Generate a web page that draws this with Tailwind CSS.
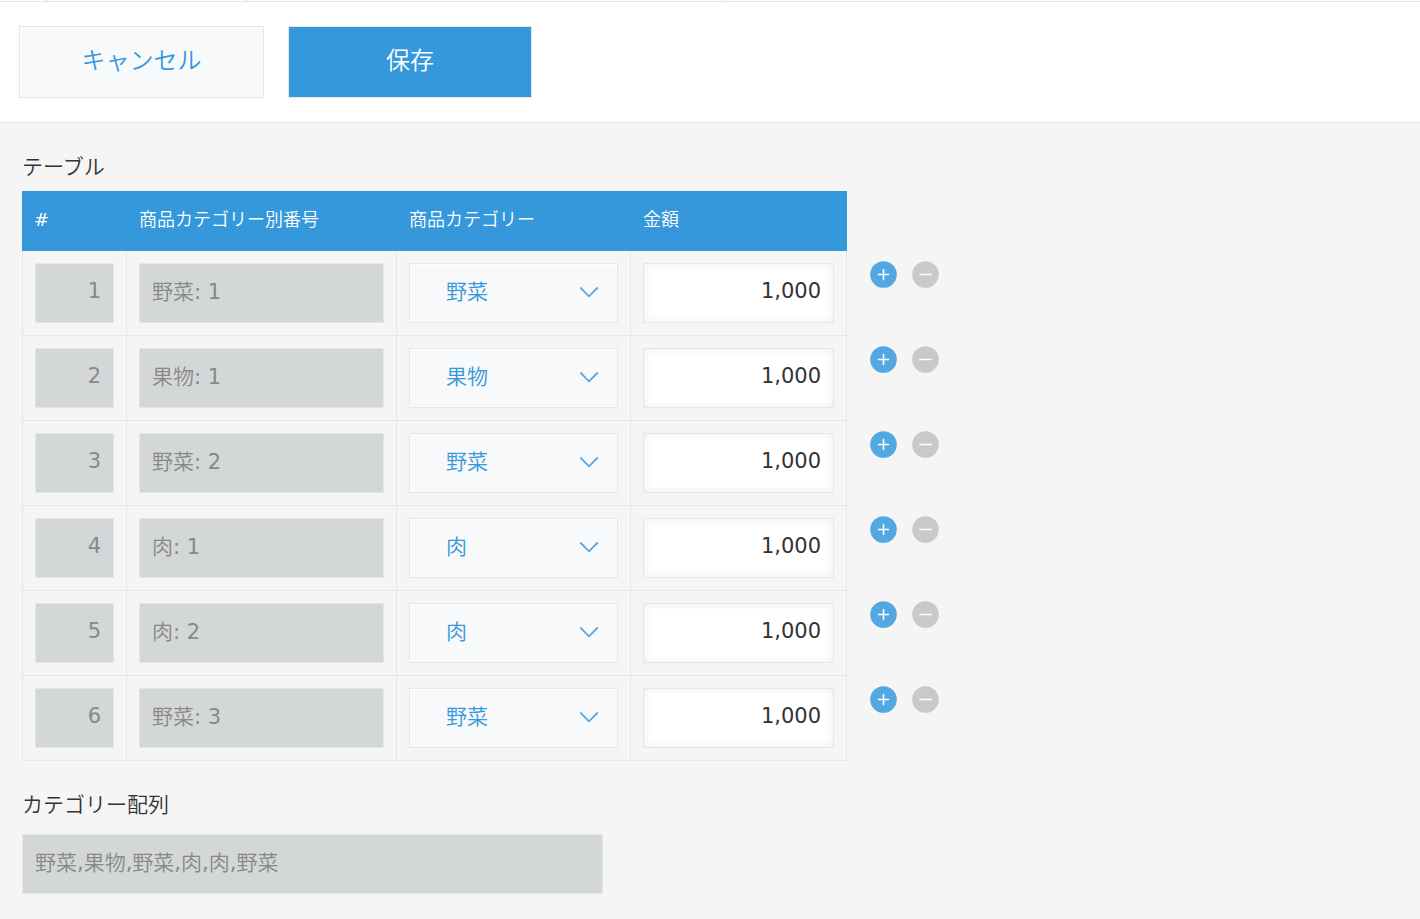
<!DOCTYPE html>
<html lang="ja">
<head>
<meta charset="utf-8">
<meta name="viewport" content="width=device-width, initial-scale=1">
<title>レコード編集</title>
<script src="https://cdn.jsdelivr.net/npm/@tailwindcss/browser@4"></script>
</head>
<body class="min-h-screen bg-[#f5f5f5] font-['DejaVu_Sans','Noto_Sans_CJK_JP_DemiLight','Noto_Sans_CJK_JP',sans-serif] text-[21px] font-normal text-[#333333]">
<header class="border-b border-[#e3e7e8] bg-white">
  <div class="flex h-0.5 border-b border-[#e3e7e8]" aria-hidden="true">
    <span class="w-12 border-r-2 border-[#e3e7e8]"></span>
    <span class="w-[199px] border-r-2 border-[#e3e7e8]"></span>
    <span class="w-[479px] border-r-2 border-[#e3e7e8]"></span>
  </div>
  <div class="flex gap-6 px-[19px] py-6 text-2xl">
    <button type="button" class="h-[72px] w-[245px] border border-[#e3e7e8] bg-[#f7f9fa] pb-0.5 font-[350] text-[#3498db] shadow-[inset_1px_1px_2px_#ffffff]">キャンセル</button>
    <button type="button" class="h-[72px] w-[244px] border border-[#e3e7e8] bg-[#3498db] pb-0.5 font-[350] text-white">保存</button>
  </div>
</header>
<main class="px-[22px] pt-7 pb-[26px]">
  <h2 class="mb-2 font-[350] leading-8">テーブル</h2>
  <table class="border-separate border-spacing-0" aria-label="テーブル">
    <thead>
      <tr class="h-[60px] text-left text-lg text-white">
        <th scope="col" class="bg-[#3498db] pb-0.5 pl-3 font-normal">#</th>
        <th scope="col" class="bg-[#3498db] pb-0.5 pl-3 font-normal">商品カテゴリー別番号</th>
        <th scope="col" class="bg-[#3498db] pb-0.5 pl-3 font-normal">商品カテゴリー</th>
        <th scope="col" class="bg-[#3498db] pb-0.5 pl-3 font-normal">金額</th>
        <td></td>
      </tr>
    </thead>
    <tbody id="rows"></tbody>
  </table>
  <label for="categories" class="mt-7 mb-[13px] block font-[350] leading-8">カテゴリー配列</label>
  <input id="categories" disabled value="野菜,果物,野菜,肉,肉,野菜" class="block h-[60px] w-[581px] border border-[#e3e7e8] bg-[#d4d7d7] px-3 pb-1.5 text-[#888888]">
</main>
<template id="row">
  <tr>
    <td class="border-x border-b border-[#e3e7e8] p-3"><input disabled data-no aria-label="#" class="block h-[60px] w-[79px] border border-[#e3e7e8] bg-[#d4d7d7] px-3 pb-1 text-right text-[#888888]"></td>
    <td class="border-r border-b border-[#e3e7e8] p-3"><input disabled data-code aria-label="商品カテゴリー別番号" class="block h-[60px] w-[245px] border border-[#e3e7e8] bg-[#d4d7d7] px-3 pb-1.5 text-[#888888]"></td>
    <td class="border-r border-b border-[#e3e7e8] p-3">
      <div class="relative">
        <select aria-label="商品カテゴリー" class="block h-[60px] w-[209px] appearance-none border border-[#e3e7e8] bg-[#f7f9fa] pl-9 font-[350] text-[#3498db] shadow-[inset_1px_1px_2px_#ffffff]"><option>野菜</option><option>果物</option><option>肉</option></select>
        <svg class="pointer-events-none absolute top-[23px] right-[19px] h-3 w-[19px]" viewBox="0 0 19 12" fill="none" stroke="#53a8e1" stroke-width="1.8" aria-hidden="true"><path d="M.2 1.5 9 10.3 17.8 1.5"/></svg>
      </div>
    </td>
    <td class="border-r border-b border-[#e3e7e8] p-3"><input value="1,000" aria-label="金額" class="block h-[60px] w-[191px] border border-[#e3e7e8] bg-white px-3 pb-1 text-right shadow-[inset_0_0_10px_#eeeeee]"></td>
    <td class="pt-2.5 pl-[23px] align-top">
      <div class="flex gap-[15px]">
        <button type="button" aria-label="行を追加" class="size-[27px]"><svg viewBox="0 0 27 27"><circle cx="13.5" cy="13.5" r="13.3" fill="#53a8e1"/><path d="M8.5 13.5h10M13.5 8.5v10" stroke="#fff" stroke-width="1.6" stroke-linecap="round"/></svg></button>
        <button type="button" aria-label="行を削除" class="size-[27px]"><svg viewBox="0 0 27 27"><circle cx="13.5" cy="13.5" r="13.3" fill="#c9c9c9"/><path d="M8 13.5h11" stroke="#fff" stroke-width="1.6" stroke-linecap="round"/></svg></button>
      </div>
    </td>
  </tr>
</template>
<script>
const records = [['野菜', 1], ['果物', 1], ['野菜', 2], ['肉', 1], ['肉', 2], ['野菜', 3]];
records.forEach(([category, count], i) => {
  const row = document.getElementById('row').content.cloneNode(true);
  row.querySelector('[data-no]').value = i + 1;
  row.querySelector('[data-code]').value = `${category}: ${count}`;
  row.querySelector('select').value = category;
  document.getElementById('rows').append(row);
});
</script>
</body>
</html>
